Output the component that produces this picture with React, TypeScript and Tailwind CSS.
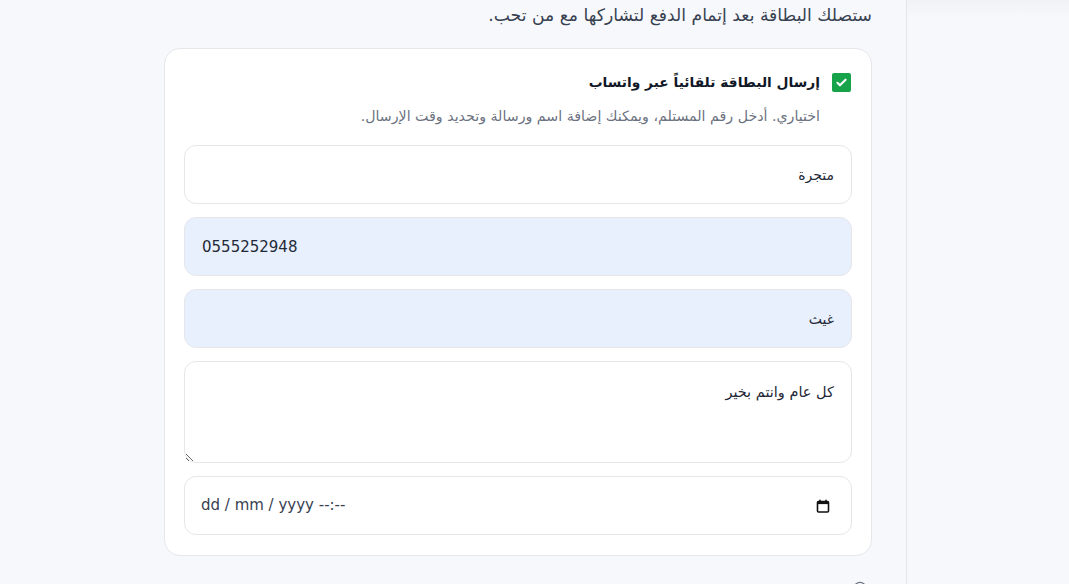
import React from "react";

const font = { fontFamily: '"DejaVu Sans", "Noto Sans", sans-serif' };

function CalendarIcon() {
  return (
    <svg viewBox="0 0 16 16" className="h-[16px] w-[16px]">
      <rect x="2.5" y="3.5" width="11" height="10.5" rx="1" fill="none" stroke="#111" strokeWidth="1.6" />
      <rect x="2.5" y="3.5" width="11" height="2.6" fill="#111" />
      <path d="M5 1.8v2.5M11 1.8v2.5" stroke="#111" strokeWidth="1.6" />
    </svg>
  );
}

export default function App() {
  return (
    <div
      dir="rtl"
      className="flex h-[584px] w-[1069px] overflow-hidden bg-[#f7f8fb] text-[#1f2937]"
      style={font}
    >
      {/* side rail */}
      <aside className="h-full w-[163px] shrink-0 border-l border-[#e3e5ea] bg-gradient-to-b from-[#f1f2f6] from-0% to-[#f7f8fb] to-[3%]" />

      {/* main column */}
      <main className="flex-1 pr-[34px]">
        <p className="mt-[3px] h-[24px] text-[17.2px] leading-[24px] text-[#374151]">
          ستصلك البطاقة بعد إتمام الدفع لتشاركها مع من تحب.
        </p>

        <section className="mt-[21px] w-[708px] rounded-[16px] border border-[#e5e7eb] bg-white px-[19px] pb-[20px] pt-[22px]">
          <label className="flex items-center gap-[12px] pr-[1px]">
            <span className="flex h-[19px] w-[19px] items-center justify-center rounded-[2px] bg-[#16a34a]">
              <svg viewBox="0 0 16 16" className="h-[13px] w-[13px]">
                <path
                  d="M3 8.4l3.1 3.1L13 4.6"
                  fill="none"
                  stroke="#fff"
                  strokeWidth="2.6"
                  strokeLinecap="round"
                  strokeLinejoin="round"
                />
              </svg>
            </span>
            <span className="text-[13.8px] font-bold leading-[22px] text-[#111827]">
              إرسال البطاقة تلقائياً عبر واتساب
            </span>
          </label>
          <p className="mr-[32px] mt-[13px] text-[14.2px] leading-[20px] text-[#6b7280]">
            اختياري. أدخل رقم المستلم، ويمكنك إضافة اسم ورسالة وتحديد وقت الإرسال.
          </p>

          <div className="mt-[19px] flex flex-col gap-[13px]">
            <input
              defaultValue="متجرة"
              className="h-[59px] w-full rounded-[12px] border border-[#e5e7eb] bg-white px-[17px] text-[14px] text-[#1f2937] outline-none"
            />
            <input
              dir="ltr"
              defaultValue="0555252948"
              className="h-[59px] w-full rounded-[12px] border border-[#e5e7eb] bg-[#e8f0fe] px-[17px] text-[15px] text-[#1f2937] outline-none"
            />
            <input
              defaultValue="غيث"
              className="h-[59px] w-full rounded-[12px] border border-[#e5e7eb] bg-[#e8f0fe] px-[17px] text-[14px] text-[#1f2937] outline-none"
            />
            <textarea
              defaultValue="كل عام وانتم بخير"
              className="block h-[102px] w-full rounded-[12px] border border-[#e5e7eb] bg-white px-[17px] pt-[19px] text-[14.5px] leading-[22px] text-[#1f2937] outline-none"
            />
            <div
              dir="ltr"
              className="flex h-[59px] w-full items-center justify-between rounded-[12px] border border-[#e5e7eb] bg-white pl-[16px] pr-[20px] text-[15px] text-[#374151]"
            >
              <span className="whitespace-pre">dd / mm / yyyy --:--</span>
              <CalendarIcon />
            </div>
          </div>
        </section>

        <div className="mr-[5px] mt-[25px] flex">
          <svg viewBox="0 0 16 16" className="h-[14px] w-[14px]">
            <circle cx="8" cy="8" r="6.5" fill="none" stroke="#6b7280" strokeWidth="1.5" />
          </svg>
        </div>
      </main>
    </div>
  );
}
